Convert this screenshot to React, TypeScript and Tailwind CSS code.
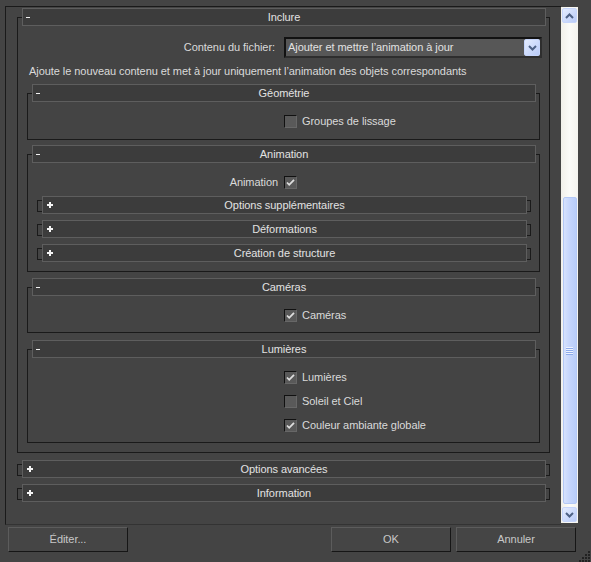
import React from 'react';

function Minus() {
  return <span className="block w-[4px] h-[1px] bg-[#f2f2f2]" />;
}

function Plus() {
  return (
    <svg width="6" height="6" viewBox="0 0 6 6" className="block">
      <rect x="0" y="2" width="6" height="2" fill="#f4f4f4" />
      <rect x="2" y="0" width="2" height="6" fill="#f4f4f4" />
    </svg>
  );
}

function Header({ title, open }: { title: string; open: boolean }) {
  return (
    <div className="h-[18px] border border-[#5e5e5e] bg-[#3c3c3c] grid grid-cols-[1fr_auto_1fr] items-center text-[#e2e2e2]">
      <div className={open ? 'pl-[3px]' : 'pl-[4px]'}>{open ? <Minus /> : <Plus />}</div>
      <div className="leading-[16px]">{title}</div>
      <div />
    </div>
  );
}

function Rollout({
  title,
  className,
  bodyClass,
  children,
}: {
  title: string;
  className: string;
  bodyClass: string;
  children: React.ReactNode;
}) {
  return (
    <div className={`border border-[#1a1a1a] ${className}`}>
      <div className="-mt-[10px] ml-[4px] mr-[3px]">
        <Header title={title} open={true} />
      </div>
      <div className={bodyClass}>{children}</div>
    </div>
  );
}

function MiniRollout({ title, className }: { title: string; className: string }) {
  return (
    <div className={`flex items-center ${className}`}>
      <div className="w-[5px] h-[12px] mt-[1px] border-l border-t border-b border-[#1a1a1a]" />
      <div className="flex-1">
        <Header title={title} open={false} />
      </div>
      <div className="w-[4px] h-[12px] mt-[1px] border-r border-t border-b border-[#1a1a1a]" />
    </div>
  );
}

function Checkbox({ checked }: { checked: boolean }) {
  return (
    <span className="w-[13px] h-[13px] shrink-0 border border-t-[#111111] border-l-[#111111] border-b-[#676767] border-r-[#676767] bg-[#595959] flex items-center justify-center">
      {checked && (
        <svg width="9" height="9" viewBox="0 0 9 9" className="block">
          <path d="M1 4.5 L3.2 6.8 L8 1.8" fill="none" stroke="#dedede" strokeWidth="1.8" />
        </svg>
      )}
    </span>
  );
}

function CheckRow({ label, checked, className = '' }: { label: string; checked: boolean; className?: string }) {
  return (
    <div className={`flex items-center h-[13px] pl-[256px] ${className}`}>
      <Checkbox checked={checked} />
      <span className="ml-[5px] leading-[13px]">{label}</span>
    </div>
  );
}

function Chevron({ up }: { up?: boolean }) {
  return (
    <svg width="9" height="6" viewBox="0 0 9 6" className="block">
      <path
        d={up ? 'M1 5 L4.5 1.5 L8 5' : 'M1 1 L4.5 4.5 L8 1'}
        fill="none"
        stroke="#4d6185"
        strokeWidth="2"
      />
    </svg>
  );
}

function ScrollButton({ up }: { up?: boolean }) {
  return (
    <div className="w-[15px] h-[15px] rounded-[2px] border border-[#c6d5fb] bg-gradient-to-br from-[#e4ecfe] to-[#b9cbf8] flex items-center justify-center">
      <Chevron up={up} />
    </div>
  );
}

function Button({ label, className }: { label: string; className: string }) {
  return (
    <div
      className={`w-[120px] h-[25px] border border-t-[#5c5c5c] border-l-[#5c5c5c] border-b-[#161616] border-r-[#161616] bg-[#454545] flex items-center justify-center text-[#c8c8c8] ${className}`}
    >
      {label}
    </div>
  );
}

export default function App() {
  return (
    <div className="relative w-[591px] h-[562px] bg-[#444444] overflow-hidden pt-[6px] font-['Liberation_Sans',Arial,sans-serif] text-[11px] tracking-[-0.06px] text-[#dadada]">
      <div className="flex ml-[5px] h-[519px]">
        {/* scrolled panel */}
        <div className="w-[556px] h-[519px] border-l border-t border-b border-l-[#1a1a1a] border-t-[#1a1a1a] border-b-[#333333] overflow-hidden">
          <div className="px-[11px] flex flex-col">
            <Rollout title="Inclure" className="mt-[10px]" bodyClass="pb-[9px] flex flex-col">
              <div className="mt-[11px] h-[21px] flex items-center justify-end pr-[7px]">
                <span className="mr-[9px]">Contenu du fichier:</span>
                <div className="w-[258px] h-[21px] border-2 border-t-[#121212] border-l-[#121212] border-b-[#2e2e2e] border-r-[#2e2e2e] bg-[#575757] flex items-center">
                  <span className="flex-1 pl-[2px] text-[#e2e2e2]">Ajouter et mettre l’animation à jour</span>
                  <div className="w-[16px] h-[17px] rounded-[2px] border border-[#c6d5fb] bg-gradient-to-br from-[#e4ecfe] to-[#b9cbf8] flex items-center justify-center">
                    <Chevron />
                  </div>
                </div>
              </div>
              <div className="mt-[6px] h-[14px] leading-[14px] pl-[11px]">
                Ajoute le nouveau contenu et met à jour uniquement l’animation des objets correspondants
              </div>

              <Rollout title="Géométrie" className="mt-[15px] mx-[9px]" bodyClass="pt-[13px] pb-[11px]">
                <CheckRow label="Groupes de lissage" checked={false} />
              </Rollout>

              <Rollout title="Animation" className="mt-[14px] mx-[9px]" bodyClass="pt-[13px] pb-[9px] flex flex-col">
                <div className="flex items-center h-[13px]">
                  <span className="w-[256px] text-right pr-[6px] leading-[13px]">Animation</span>
                  <Checkbox checked={true} />
                </div>
                <MiniRollout title="Options supplémentaires" className="mt-[7px] pl-[9px] pr-[8px]" />
                <MiniRollout title="Déformations" className="mt-[6px] pl-[9px] pr-[8px]" />
                <MiniRollout title="Création de structure" className="mt-[6px] pl-[9px] pr-[8px]" />
              </Rollout>

              <Rollout title="Caméras" className="mt-[15px] mx-[9px]" bodyClass="pt-[13px] pb-[10px]">
                <CheckRow label="Caméras" checked={true} />
              </Rollout>

              <Rollout title="Lumières" className="mt-[16px] mx-[9px]" bodyClass="pt-[13px] pb-[10px] flex flex-col">
                <CheckRow label="Lumières" checked={true} />
                <CheckRow label="Soleil et Ciel" checked={false} className="mt-[11px]" />
                <CheckRow label="Couleur ambiante globale" checked={true} className="mt-[11px]" />
              </Rollout>
            </Rollout>

            <MiniRollout title="Options avancées" className="mt-[7px]" />
            <MiniRollout title="Information" className="mt-[6px]" />
          </div>
        </div>

        {/* scrollbar */}
        <div className="mt-[1px] w-[17px] h-[516px] bg-gradient-to-r from-[#f1f0ea] via-[#fbfbf8] to-[#f4f3ee] flex flex-col items-center pt-[1px]">
          <ScrollButton up />
          <div className="mt-[174px] w-[14px] h-[307px] rounded-[2px] border border-[#b3c8f6] bg-gradient-to-r from-[#d6e2fd] via-[#c4d5fc] to-[#b9cdf9] flex items-center justify-center">
            <div className="flex flex-col">
              <div className="w-[7px] h-[1px] bg-[#eef3fe]" />
              <div className="w-[7px] h-[1px] bg-[#8eacec]" />
              <div className="w-[7px] h-[1px] bg-[#eef3fe]" />
              <div className="w-[7px] h-[1px] bg-[#8eacec]" />
              <div className="w-[7px] h-[1px] bg-[#eef3fe]" />
              <div className="w-[7px] h-[1px] bg-[#8eacec]" />
              <div className="w-[7px] h-[1px] bg-[#eef3fe]" />
              <div className="w-[7px] h-[1px] bg-[#8eacec]" />
            </div>
          </div>
          <div className="mt-[3px]">
            <ScrollButton />
          </div>
        </div>
      </div>

      {/* buttons */}
      <div className="flex mt-[2px]">
        <Button label="Éditer..." className="ml-[8px]" />
        <Button label="OK" className="ml-[203px]" />
        <Button label="Annuler" className="ml-[5px]" />
      </div>

      {/* size grip */}
      <svg width="14" height="12" viewBox="0 0 14 12" className="absolute right-0 bottom-0 block">
        <rect x="11" y="1" width="2" height="2" fill="#222222" />
        <rect x="8" y="4" width="2" height="2" fill="#222222" />
        <rect x="11" y="4" width="2" height="2" fill="#222222" />
        <rect x="5" y="7" width="2" height="2" fill="#222222" />
        <rect x="8" y="7" width="2" height="2" fill="#222222" />
        <rect x="11" y="7" width="2" height="2" fill="#222222" />
        <rect x="2" y="10" width="2" height="2" fill="#222222" />
        <rect x="5" y="10" width="2" height="2" fill="#222222" />
        <rect x="8" y="10" width="2" height="2" fill="#222222" />
        <rect x="11" y="10" width="2" height="2" fill="#222222" />
      </svg>
    </div>
  );
}
